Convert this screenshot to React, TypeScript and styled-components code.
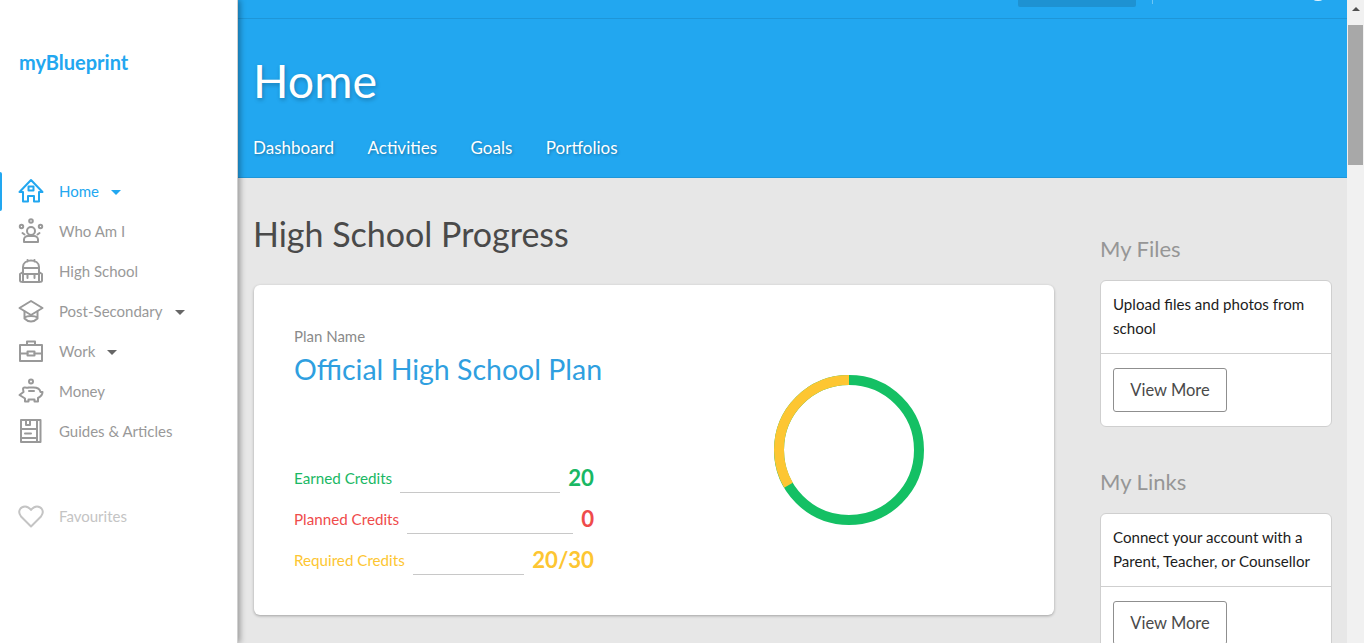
import React from "react";
import styled, { createGlobalStyle } from "styled-components";

const Global = createGlobalStyle`
  html, body { margin: 0; padding: 0; height: 643px; overflow: hidden; background: #e7e7e7; }
  * { box-sizing: border-box; }
  body { font-family: "Lato", "Open Sans", sans-serif; }
`;

const Page = styled.div`
  display: flex;
  width: 1364px;
  height: 643px;
  overflow: hidden;
`;

const Sidebar = styled.aside`
  width: 238px;
  flex: none;
  height: 643px;
  background: #fff;
  border-right: 1px solid #d0d0d0;
  box-shadow: 2px 0 6px rgba(0, 0, 0, 0.35);
  position: relative;
  z-index: 2;
  padding-top: 50px;
`;

const Logo = styled.div`
  font-size: 20px;
  line-height: 24px;
  font-weight: 700;
  color: #22a7f0;
  padding-left: 19px;
  margin-bottom: 97px;
`;

const NavList = styled.nav`
  display: flex;
  flex-direction: column;
`;

const NavRow = styled.div<{ $active?: boolean; $muted?: boolean }>`
  height: 40px;
  display: flex;
  align-items: center;
  padding-left: 18px;
  gap: 15px;
  font-size: 15px;
  color: ${(p) => (p.$active ? "#22a7f0" : p.$muted ? "#c4c4c4" : "#999999")};
  position: relative;
  margin-top: ${(p) => (p.$muted ? "45px" : "0")};
`;

const ActiveMark = styled.span`
  position: absolute;
  left: 0;
  top: 1px;
  width: 2px;
  height: 39px;
  background: #22a7f0;
  border-radius: 0 2px 2px 0;
`;

const Caret = styled.span<{ $color: string }>`
  width: 0;
  height: 0;
  margin-left: -3px;
  margin-top: 2px;
  border-left: 5px solid transparent;
  border-right: 5px solid transparent;
  border-top: 5px solid ${(p) => p.$color};
`;

const Main = styled.main`
  flex: 1;
  min-width: 0;
  display: flex;
  flex-direction: column;
`;

const Header = styled.header`
  height: 178px;
  flex: none;
  background: #22a7f0;
  border-bottom: 1px solid #1f96d8;
  display: flex;
  flex-direction: column;
`;

const TopBar = styled.div`
  height: 19px;
  flex: none;
  border-bottom: 1px solid #1e96d8;
  display: flex;
  justify-content: flex-end;
  position: relative;
`;

const TopButton = styled.div`
  width: 118px;
  height: 7px;
  background: #1e92d2;
  border-radius: 0 0 2px 2px;
  margin-right: 211px;
`;

const TopDivider = styled.span`
  position: absolute;
  left: 914px;
  top: 0;
  width: 1px;
  height: 4px;
  background: #6cc6f5;
`;

const TopDot = styled.span`
  position: absolute;
  left: 1075px;
  top: -4px;
  width: 10px;
  height: 5px;
  border-radius: 50%;
  background: #e8f6fe;
`;

const PageTitle = styled.h1`
  margin: 0;
  padding: 30px 0 0 15px;
  font-size: 46.5px;
  line-height: 62px;
  font-weight: 400;
  color: #fff;
  text-shadow: 1px 2px 4px rgba(0, 0, 0, 0.25);
`;

const Tabs = styled.div`
  display: flex;
  gap: 33.5px;
  padding: 25px 0 0 15px;
  font-size: 17px;
  line-height: 24px;
  color: #fff;
  text-shadow: 1px 1px 3px rgba(0, 0, 0, 0.3);
`;

const Content = styled.div`
  flex: 1;
  display: flex;
  padding-left: 16px;
  min-height: 0;
  overflow: hidden;
`;

const Left = styled.section`
  width: 800px;
  flex: none;
`;

const Heading = styled.h2`
  margin: 0 0 0 -1px;
  padding-top: 34px;
  font-size: 34px;
  line-height: 44px;
  font-weight: 400;
  color: #4a4a4a;
`;

const ProgressCard = styled.div`
  margin-top: 29px;
  height: 330px;
  background: #fff;
  border-radius: 6px;
  box-shadow: 0 1px 3px rgba(0, 0, 0, 0.3);
  display: flex;
  padding: 41px 0 0 40px;
`;

const PlanInfo = styled.div`
  width: 300px;
  flex: none;
  display: flex;
  flex-direction: column;
`;

const PlanLabel = styled.div`
  font-size: 15px;
  line-height: 20px;
  color: #8a8a8a;
`;

const PlanName = styled.div`
  font-size: 28.5px;
  line-height: 38px;
  color: #2f9fe0;
  margin-top: 4px;
  margin-bottom: 64px;
  white-space: nowrap;
`;

const CreditRow = styled.div<{ $color: string }>`
  height: 41px;
  display: flex;
  align-items: flex-end;
  color: ${(p) => p.$color};
`;

const CreditLabel = styled.span`
  font-size: 15.2px;
  line-height: 30px;
  white-space: nowrap;
`;

const CreditLine = styled.span`
  flex: 1;
  height: 1px;
  background: #c8c8c8;
  margin: 0 8px;
`;

const CreditValue = styled.span`
  font-size: 22.2px;
  line-height: 30px;
  font-weight: 700;
`;

const ChartWrap = styled.div`
  margin-left: 179.5px;
  margin-top: 49px;
`;

const Right = styled.aside`
  width: 232px;
  margin-left: 46px;
  flex: none;
`;

const SideHeading = styled.h3`
  margin: 0;
  padding-top: 55px;
  font-size: 22px;
  line-height: 32px;
  font-weight: 400;
  color: #969696;
`;

const SideGroup = styled.div`
  & + & h3 { padding-top: 39px; }
`;

const SideCard = styled.div`
  margin-top: 15px;
  background: #fff;
  border: 1px solid #cfcfcf;
  border-radius: 6px;
`;

const SideText = styled.div`
  padding: 11px 12px 13px;
  font-size: 15.1px;
  line-height: 24px;
  color: #1c1c1c;
  border-bottom: 1px solid #cfcfcf;
`;

const SideFoot = styled.div`
  padding: 14px 12px 14px;
`;

const ViewMore = styled.button`
  display: block;
  width: 114px;
  height: 44px;
  background: #fff;
  border: 1px solid #8f8f8f;
  border-radius: 3px;
  font-family: inherit;
  font-size: 16.5px;
  color: #4a4a4a;
  padding: 0;
`;

const ScrollTrack = styled.div`
  width: 17px;
  flex: none;
  background: #f1f1f1;
  display: flex;
  flex-direction: column;
  align-items: center;
  padding-top: 7px;
`;

const ScrollArrow = styled.span`
  width: 0;
  height: 0;
  border-left: 4px solid transparent;
  border-right: 4px solid transparent;
  border-bottom: 4px solid #505050;
`;

const ScrollThumb = styled.div`
  width: 15px;
  height: 140px;
  margin-top: 14px;
  background: #a8a8a8;
`;

const Icon = ({ children }: { children: React.ReactNode }) => (
  <svg width="26" height="26" viewBox="0 0 26 26" fill="none" stroke="currentColor" strokeWidth="2" strokeLinejoin="round" strokeLinecap="round" style={{ flex: "none" }}>
    {children}
  </svg>
);

const HomeIcon = () => (
  <Icon>
    <path d="M1.500 14 13 2l11.500 12H21v9.500h-5V18h-6v5.500H5V14z" />
    <rect x="10.500" y="8.500" width="5" height="4" />
  </Icon>
);
const PeopleIcon = () => (
  <Icon>
    <circle cx="13" cy="3" r="1.800" />
    <circle cx="3.500" cy="8.500" r="1.700" />
    <circle cx="22.500" cy="8.500" r="1.700" />
    <circle cx="13" cy="13" r="4" />
    <path d="M6 24v-2.500c0-2 2-3.500 4-3.500h6c2 0 4 1.500 4 3.500V24zM4.500 15l2 1.500M21.500 15l-2 1.500" />
  </Icon>
);
const BagIcon = () => (
  <Icon>
    <path d="M5 24V9c0-4 3.500-6.500 8-6.500S21 5 21 9v15zM9.500 3.500V2M16.500 3.500V2M5 10h16" />
    <path d="M5 14 2 16v6.500c0 1 .5 1.500 3 1.500M21 14l3 2v6.500c0 1-.5 1.500-3 1.500M5 16h16M9.500 16v4M16.500 16v4" />
  </Icon>
);
const CapIcon = () => (
  <Icon>
    <path d="M1.500 10 13 3l11.500 7L13 17z" />
    <path d="M6.500 13.500v7c2 2 4 3 6.500 3s4.500-1 6.500-3v-7M6.500 19.500c3-2 10-2 13 0" />
  </Icon>
);
const CaseIcon = () => (
  <Icon>
    <path d="M2 7h22v16H2zM9 7V3.500h8V7M2 15.500h7.500M16.500 15.500H24" />
    <rect x="9.500" y="13.500" width="7" height="4" />
  </Icon>
);
const PigIcon = () => (
  <Icon>
    <circle cx="13" cy="3.500" r="2" />
    <path d="M6.500 9.500c-2.500 0-1 3-1 4.500L1.500 17l4 2.500 1.500 1v3h3.500v-2h6V23.500h3.500V20c2-1 4.500-3 4.500-6h-2c-.5-2.500-3-4.500-7-4.500h-5c-1 .5-1.500 0-3.500 0z" />
    <path d="M11 13h5" />
  </Icon>
);
const BookIcon = () => (
  <Icon>
    <path d="M3 2h19.500v22H3zM19 2v22M3 11h16M3 20h16M7 15.500h6M8 2v5h4V2" />
  </Icon>
);
const HeartIcon = () => (
  <Icon>
    <path d="M13 23.500 3 13.500C-1 8.500 2.500 3.500 7 3.500c3 0 4.500 1.500 6 3.500 1.500-2 3-3.500 6-3.500 4.500 0 8 5 4 10z" />
  </Icon>
);

const NAV = [
  { label: "Home", icon: <HomeIcon />, active: true, caret: true },
  { label: "Who Am I", icon: <PeopleIcon /> },
  { label: "High School", icon: <BagIcon /> },
  { label: "Post-Secondary", icon: <CapIcon />, caret: true },
  { label: "Work", icon: <CaseIcon />, caret: true },
  { label: "Money", icon: <PigIcon /> },
  { label: "Guides & Articles", icon: <BookIcon /> },
];

const CREDITS = [
  { label: "Earned Credits", value: "20", color: "#19b864" },
  { label: "Planned Credits", value: "0", color: "#ef4b4b" },
  { label: "Required Credits", value: "20/30", color: "#fdc632" },
];

const Donut = () => {
  const r = 70;
  const c = 2 * Math.PI * r;
  const yellow = 1 / 3;
  return (
    <svg width="150" height="150" viewBox="0 0 150 150" style={{ display: "block" }}>
      <circle cx="75" cy="75" r={r} fill="none" stroke="#14c064" strokeWidth="10" />
      <circle cx="75" cy="75" r={r} fill="none" stroke="#fdc632" strokeWidth="10" strokeDasharray={`${c * yellow} ${c}`} transform="rotate(-90 75 75) scale(1 -1) translate(0 -150)" />
    </svg>
  );
};

export default function App() {
  return (
    <Page>
      <Global />
      <Sidebar>
        <Logo>myBlueprint</Logo>
        <NavList>
          {NAV.map((n) => (
            <NavRow key={n.label} $active={n.active}>
              {n.active && <ActiveMark />}
              {n.icon}
              <span>{n.label}</span>
              {n.caret && <Caret $color={n.active ? "#22a7f0" : "#666"} />}
            </NavRow>
          ))}
          <NavRow $muted>
            <HeartIcon />
            <span>Favourites</span>
          </NavRow>
        </NavList>
      </Sidebar>
      <Main>
        <Header>
          <TopBar>
            <TopButton />
            <TopDivider />
            <TopDot />
          </TopBar>
          <PageTitle>Home</PageTitle>
          <Tabs>
            <span>Dashboard</span>
            <span>Activities</span>
            <span>Goals</span>
            <span>Portfolios</span>
          </Tabs>
        </Header>
        <Content>
          <Left>
            <Heading>High School Progress</Heading>
            <ProgressCard>
              <PlanInfo>
                <PlanLabel>Plan Name</PlanLabel>
                <PlanName>Official High School Plan</PlanName>
                {CREDITS.map((c) => (
                  <CreditRow key={c.label} $color={c.color}>
                    <CreditLabel>{c.label}</CreditLabel>
                    <CreditLine />
                    <CreditValue>{c.value}</CreditValue>
                  </CreditRow>
                ))}
              </PlanInfo>
              <ChartWrap>
                <Donut />
              </ChartWrap>
            </ProgressCard>
          </Left>
          <Right>
            <SideGroup>
              <SideHeading>My Files</SideHeading>
              <SideCard>
                <SideText>Upload files and photos from school</SideText>
                <SideFoot>
                  <ViewMore>View More</ViewMore>
                </SideFoot>
              </SideCard>
            </SideGroup>
            <SideGroup>
              <SideHeading>My Links</SideHeading>
              <SideCard>
                <SideText>Connect your account with a Parent, Teacher, or Counsellor</SideText>
                <SideFoot>
                  <ViewMore>View More</ViewMore>
                </SideFoot>
              </SideCard>
            </SideGroup>
          </Right>
        </Content>
      </Main>
      <ScrollTrack>
        <ScrollArrow />
        <ScrollThumb />
      </ScrollTrack>
    </Page>
  );
}
